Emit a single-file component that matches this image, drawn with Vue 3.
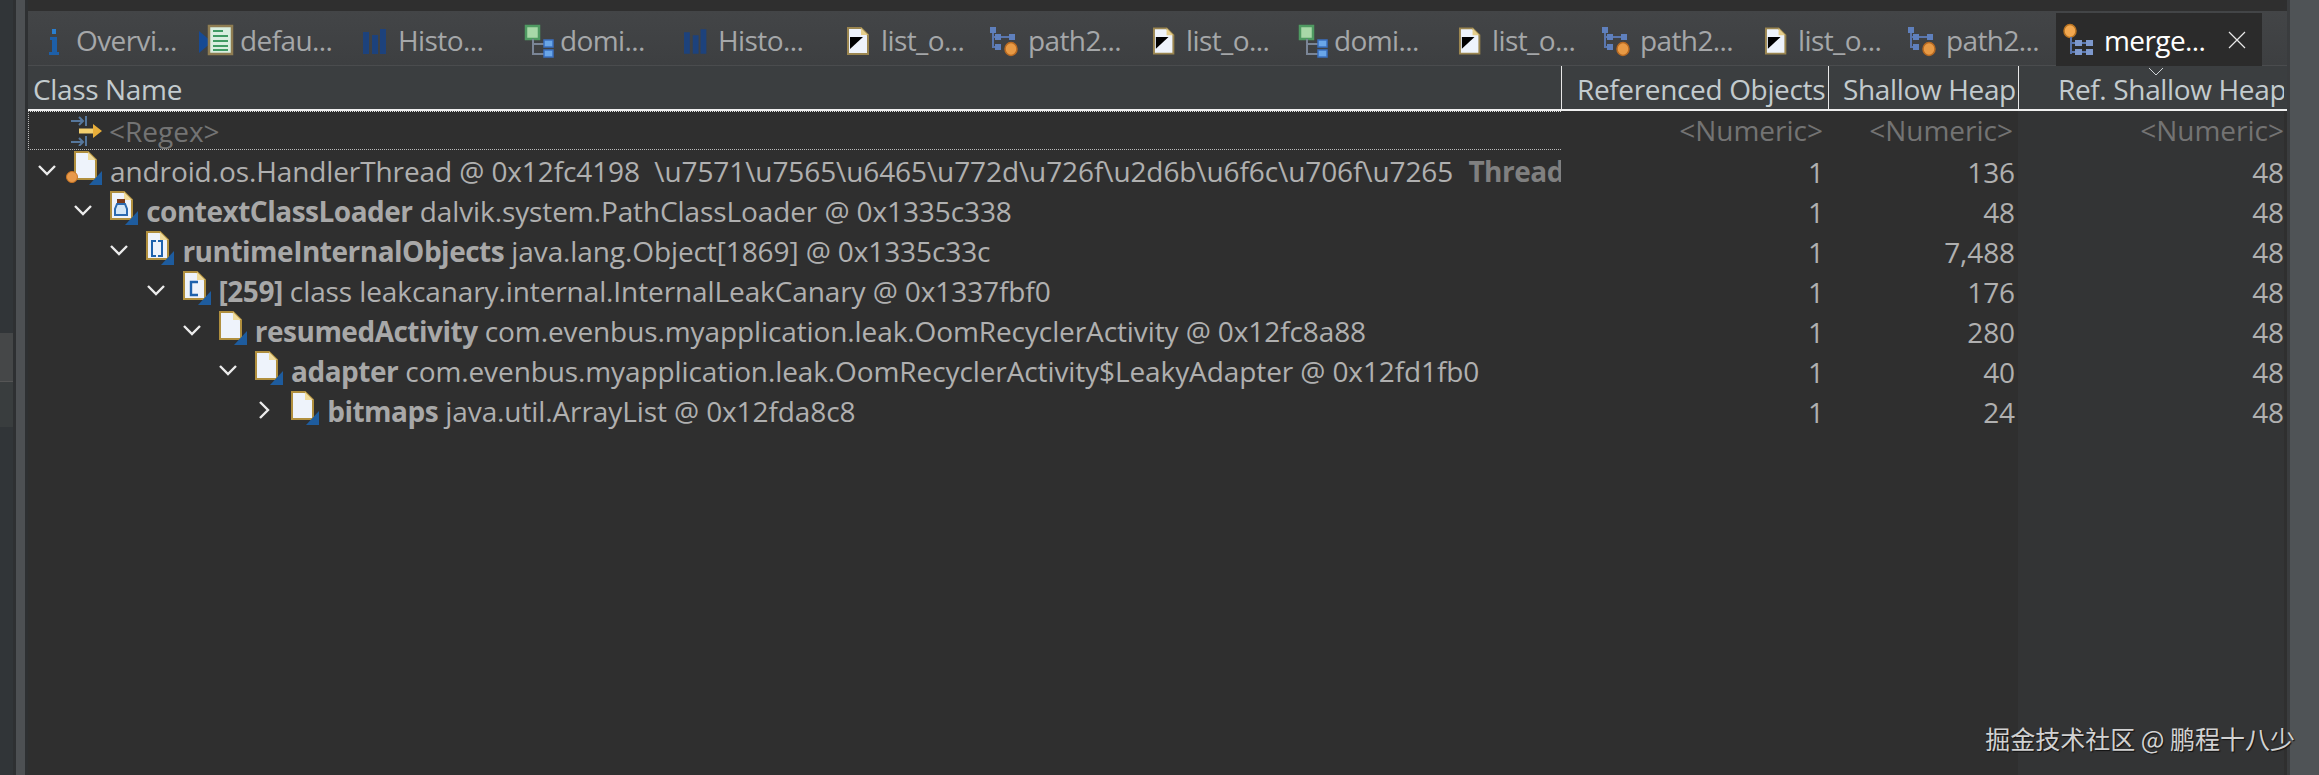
<script setup>
const tabs = [
  { icon: 'i', off: 30, w: 153, text: 'Overvi...' },
  { icon: 'def', off: 41, w: 164, text: 'defau...' },
  { icon: 'hist', off: 35, w: 161, text: 'Histo...' },
  { icon: 'domi', off: 36, w: 160, text: 'domi...' },
  { icon: 'hist', off: 34, w: 162, text: 'Histo...' },
  { icon: 'list', off: 35, w: 144, text: 'list_o...' },
  { icon: 'path', off: 38, w: 162, text: 'path2...' },
  { icon: 'list', off: 34, w: 146, text: 'list_o...' },
  { icon: 'domi', off: 36, w: 160, text: 'domi...' },
  { icon: 'list', off: 34, w: 144, text: 'list_o...' },
  { icon: 'path', off: 38, w: 162, text: 'path2...' },
  { icon: 'list', off: 34, w: 144, text: 'list_o...' },
  { icon: 'path', off: 38, w: 148, text: 'path2...' }
]
const rows = [
  { d: 0, icon: 'docgc', open: true, name: '', rest: 'android.os.HandlerThread @ 0x12fc4198  \\u7571\\u7565\\u6465\\u772d\\u726f\\u2d6b\\u6f6c\\u706f\\u7265 ', tail: 'Thread', a: '1', b: '136' },
  { d: 1, icon: 'docload', open: true, name: 'contextClassLoader', rest: ' dalvik.system.PathClassLoader @ 0x1335c338', a: '1', b: '48' },
  { d: 2, icon: 'docarr', open: true, name: 'runtimeInternalObjects', rest: ' java.lang.Object[1869] @ 0x1335c33c', a: '1', b: '7,488' },
  { d: 3, icon: 'docc', open: true, name: '[259]', rest: ' class leakcanary.internal.InternalLeakCanary @ 0x1337fbf0', a: '1', b: '176' },
  { d: 4, icon: 'doc', open: true, name: 'resumedActivity', rest: ' com.evenbus.myapplication.leak.OomRecyclerActivity @ 0x12fc8a88', a: '1', b: '280' },
  { d: 5, icon: 'doc', open: true, name: 'adapter', rest: ' com.evenbus.myapplication.leak.OomRecyclerActivity$LeakyAdapter @ 0x12fd1fb0', a: '1', b: '40' },
  { d: 6, icon: 'doc', open: false, name: 'bitmaps', rest: ' java.util.ArrayList @ 0x12fda8c8', a: '1', b: '24' }
]
</script>

<template>
  <div class="page">
    <svg class="sprite" aria-hidden="true">
      <symbol id="t-i" viewBox="0 0 30 40">
        <rect x="6" y="8" width="4" height="5" fill="#2a7fd0" />
        <path d="M4 16h7v15h2v3H3v-3h3V19H4z" fill="#1d5fa8" />
      </symbol>
      <symbol id="t-def" viewBox="0 0 41 40">
        <path d="M0 10 L13 21 L0 32 Z" fill="#174a94" />
        <rect x="10" y="5" width="23" height="28" fill="#d8eee0" stroke="#8f7d52" stroke-width="2.5" />
        <path d="M14 10h10M14 15h15M14 20h15M14 25h15M14 29h15" stroke="#3f9a63" stroke-width="2" />
      </symbol>
      <symbol id="t-hist" viewBox="0 0 35 40">
        <path d="M0 11h6v22H0zM9 14h6v19H9zM17 8h6v25h-6z" fill="#1d427c" />
      </symbol>
      <symbol id="t-domi" viewBox="0 0 36 40">
        <rect x="2" y="5" width="13" height="13" fill="#a8d8a8" stroke="#4f9a62" stroke-width="2.5" />
        <path d="M9 18v15h11M9 23h11" stroke="#7a8596" stroke-width="2" fill="none" />
        <rect x="20" y="19" width="9" height="7" fill="#6aa6e8" stroke="#3a6fc0" stroke-width="1.5" />
        <rect x="20" y="29" width="9" height="7" fill="#6aa6e8" stroke="#3a6fc0" stroke-width="1.5" />
      </symbol>
      <symbol id="t-list" viewBox="0 0 35 40">
        <path d="M2 7H15L22 14V33H2Z" fill="#eef3fb" stroke="#9b8650" stroke-width="2" />
        <path d="M15 7V14H22Z" fill="#e6cf8c" />
        <path d="M4 16H17L4 28Z" fill="#000" />
      </symbol>
      <symbol id="t-path" viewBox="0 0 38 40">
        <rect x="0" y="6" width="6" height="6" fill="#5f80bd" />
        <path d="M3 12V26H8M3 16H22" stroke="#5a76ad" stroke-width="2" fill="none" />
        <rect x="5" y="13" width="6" height="6" fill="#5f80bd" />
        <rect x="19" y="13" width="6" height="6" fill="#5f80bd" />
        <rect x="5" y="23" width="6" height="6" fill="#5f80bd" />
        <ellipse cx="21" cy="28" rx="6" ry="6.5" fill="#e89a45" stroke="#b86a22" stroke-width="1.5" />
      </symbol>
      <symbol id="t-merge" viewBox="0 0 48 40">
        <ellipse cx="14" cy="10" rx="6" ry="6.5" fill="#f2a850" stroke="#b97423" stroke-width="1.5" />
        <path d="M15 16V33M15 22H36M15 31H36" stroke="#5a76ad" stroke-width="2" fill="none" />
        <rect x="19" y="19" width="7" height="6" fill="#7d98cc" />
        <rect x="30" y="19" width="7" height="6" fill="#7d98cc" />
        <rect x="19" y="28" width="7" height="6" fill="#7d98cc" />
        <rect x="30" y="28" width="7" height="6" fill="#7d98cc" />
      </symbol>
      <symbol id="r-base" viewBox="0 0 36 34">
        <path d="M9 1H22L30 9V28H9Z" fill="#eef3fb" stroke="#b08f3e" stroke-width="2" />
        <path d="M22 1V9H30Z" fill="#f0dc9c" />
      </symbol>
      <symbol id="r-doc" viewBox="0 0 36 34">
        <use href="#r-base" />
        <path d="M36 20V34H23Z" fill="#1e5c9e" />
      </symbol>
      <symbol id="r-docgc" viewBox="0 0 36 34">
        <use href="#r-base" />
        <path d="M36 20V34H23Z" fill="#1e5c9e" />
        <circle cx="6" cy="26" r="5.5" fill="#e8994a" stroke="#c87422" stroke-width="1" />
      </symbol>
      <symbol id="r-docload" viewBox="0 0 36 34">
        <use href="#r-base" />
        <rect x="15" y="8" width="8" height="4" fill="#7a3a1c" />
        <path d="M15 13L13 18V24H25V18L23 13Z" fill="#d3e6f7" stroke="#2c6ab0" stroke-width="2" />
        <path d="M36 20V34H23Z" fill="#1e5c9e" />
      </symbol>
      <symbol id="r-docarr" viewBox="0 0 36 34">
        <use href="#r-base" />
        <path d="M18 10H14V25H18M20 10H24V25H20" fill="none" stroke="#1e62ad" stroke-width="2" />
        <path d="M36 20V34H23Z" fill="#1e5c9e" />
      </symbol>
      <symbol id="r-docc" viewBox="0 0 36 34">
        <use href="#r-base" />
        <path d="M23 11H16V24H23" fill="none" stroke="#1e62ad" stroke-width="2.4" />
        <path d="M36 20V34H23Z" fill="#1e5c9e" />
      </symbol>
    </svg>

    <aside class="left">
      <div class="left-panels">
        <div class="lp lp-a"></div>
        <div class="lp lp-b"></div>
        <div class="lp lp-c"></div>
        <div class="lp lp-a grow"></div>
      </div>
      <div class="left-sash"></div>
    </aside>

    <main class="main">
      <div class="tabbar">
        <div v-for="(t, i) in tabs" :key="i" class="tab" :style="{ width: t.w + 'px' }">
          <svg class="tab-icon" :style="{ width: t.off + 'px' }" :viewBox="`0 0 ${t.off} 40`">
            <use :href="`#t-${t.icon}`" :width="t.off" height="40" />
          </svg>
          <span>{{ t.text }}</span>
        </div>
        <div class="tab active">
          <svg class="tab-icon merge" viewBox="0 0 48 40"><use href="#t-merge" width="48" height="40" /></svg>
          <span>merge...</span>
          <svg class="close" viewBox="0 0 18 18"><path d="M1 1L17 17M17 1L1 17" stroke="#e8e8e8" stroke-width="1.2" /></svg>
        </div>
      </div>

      <div class="grid head">
        <div class="hc">Class Name</div>
        <div class="hc sep second">Referenced Objects</div>
        <div class="hc sep third">Shallow Heap</div>
        <div class="hc sep last">
          <svg class="sort" viewBox="0 0 16 9"><path d="M1 1L8 8L15 1" fill="none" stroke="#cfd3d5" stroke-width="1" /></svg>
          Ref. Shallow Heap
        </div>
      </div>

      <div class="grid filter">
        <div class="fc first">
          <svg class="regex" viewBox="0 0 32 30">
            <path d="M0 5H12M8 1L12 5L8 9M15 0V10M0 26H12M8 22L12 26L8 30M15 20V30" fill="none" stroke="#56779c" stroke-width="2" />
            <path d="M8 15H24" stroke="#f3cf6e" stroke-width="5" />
            <path d="M22 8L31 15L22 22Z" fill="#e8ae3a" />
          </svg>
          <span>&lt;Regex&gt;</span>
        </div>
        <div class="fc num">&lt;Numeric&gt;</div>
        <div class="fc num">&lt;Numeric&gt;</div>
        <div class="fc num lastcol">&lt;Numeric&gt;</div>
      </div>

      <div v-for="(r, i) in rows" :key="i" class="grid row">
        <div class="cell tree" :style="{ paddingLeft: r.d * 36.2 + 'px' }">
          <svg class="chev" viewBox="0 0 20 20">
            <path v-if="r.open" d="M2 6L10 14L18 6" fill="none" stroke="#ececec" stroke-width="2.4" />
            <path v-else d="M6 2L14 10L6 18" fill="none" stroke="#ececec" stroke-width="2.4" />
          </svg>
          <svg class="ricon" viewBox="0 0 36 34"><use :href="`#r-${r.icon}`" width="36" height="34" /></svg>
          <span class="label"><b v-if="r.name">{{ r.name }}</b>{{ r.rest }}<b v-if="r.tail" class="tail">{{ r.tail }}</b></span>
        </div>
        <div class="cell n">{{ r.a }}</div>
        <div class="cell n third-n">{{ r.b }}</div>
        <div class="cell n lastcol">48</div>
      </div>

      <div class="grid filler">
        <div></div><div></div><div></div><div class="lastcol"></div>
      </div>
    </main>

    <aside class="right"></aside>
    <div class="mark">掘金技术社区 @ 鹏程十八少</div>
  </div>
</template>

<style>
html, body { margin: 0; background: #2f2f2f; }
</style>

<style scoped>
.page {
  position: relative;
  display: flex;
  width: 2319px;
  height: 775px;
  overflow: hidden;
  background: #2f2f2f;
  font-family: "Open Sans", "Noto Sans", sans-serif;
}
.sprite { position: absolute; width: 0; height: 0; }
.left { flex: none; width: 28px; display: flex; background: #2e3032; }
.left-panels { width: 13px; display: flex; flex-direction: column; }
.lp { flex: none; }
.lp-a { height: 333px; background: #313538; }
.lp-b { height: 48px; background: #454748; }
.lp-c { height: 45px; background: #393d3e; border-top: 1px solid #555; }
.grow { flex: 1; }
.left-sash { width: 9px; margin-left: 3px; background: #4d5053; }
.main { flex: none; width: 2259px; display: flex; flex-direction: column; padding-top: 11px; background: #2f2f2f; }
.tabbar {
  flex: none;
  height: 55px;
  display: flex;
  padding-left: 18px;
  box-sizing: border-box;
  background: linear-gradient(#434547, #3d3f41);
  border-bottom: 1px solid #4a4c4e;
}
.tab {
  flex: none;
  height: 54px;
  display: flex;
  align-items: flex-start;
  color: #a5a7a9;
  font-size: 28px;
  letter-spacing: -0.6px;
  white-space: nowrap;
}
.tab-icon { flex: none; height: 40px; margin-top: 10px; }
.tab span { line-height: 38px; margin-top: 10px; }
.tab.active {
  width: 206px;
  margin-top: 2px;
  height: 53px;
  background: #2b2b2b;
  color: #fff;
}
.tab-icon.merge { width: 48px; margin-top: 8px; }
.tab.active span { margin-top: 8px; }
.close { width: 18px; height: 18px; margin-left: 23px; margin-top: 18px; }
.grid { display: grid; grid-template-columns: 1533px 267px 190px 266px; flex: none; }
.head {
  height: 45px;
  box-sizing: border-box;
  background: #3b3e40;
  border-bottom: 2px solid #f0f0f0;
  color: #c3cbce;
  font-size: 28px;
  letter-spacing: -0.35px;
}
.hc { position: relative; padding-left: 5px; line-height: 47px; white-space: nowrap; overflow: hidden; }
.hc.sep { border-left: 1px solid #e8e8e8; }
.hc.second { padding-left: 15px; }
.hc.third { padding-left: 14px; }
.hc.last { padding-left: 39px; }
.sort { position: absolute; left: 129px; top: 1px; width: 16px; height: 9px; }
.filter { height: 39px; color: #737373; font-size: 28px; }
.fc { line-height: 38px; }
.fc.first {
  display: flex;
  align-items: center;
  box-sizing: border-box;
  height: 39px;
  padding-left: 42px;
  border: 1px dotted #bbb;
  border-top: 1px dotted #ddd;
  border-right: 0;
}
.regex { width: 32px; height: 30px; margin-right: 6px; }
.num { text-align: right; padding-right: 5px; }
.num.lastcol { padding-right: 0; }
.lastcol { background: #333435; }
.row { height: 40px; color: #b0b0b0; font-size: 28px; letter-spacing: -0.1px; line-height: 41px; }
.cell { white-space: nowrap; overflow: hidden; }
.n { line-height: 44px; text-align: right; padding-right: 4px; }
.third-n { padding-right: 3px; }
.n.lastcol { padding-right: 0; }
.tree { display: flex; align-items: center; }
.chev { flex: none; width: 20px; height: 20px; margin-left: 9px; }
.ricon { flex: none; width: 36px; height: 34px; margin-left: 9px; margin-top: -4px; }
.label { white-space: pre; margin-left: 8px; padding-top: 3px; }
.label b { font-weight: 700; color: #a8a8a8; letter-spacing: -0.5px; }
.label b.tail { color: #808080; margin-left: 8px; }
.filler { flex: 1; }
.right { flex: none; width: 32px; background: #4f5356; border-left: 3px solid #3a3c3e; box-sizing: border-box; }
.mark {
  position: absolute;
  right: 24px;
  top: 722px;
  font-family: "Noto Sans CJK SC", "Noto Sans", sans-serif;
  font-size: 25px;
  line-height: 32px;
  color: #d2d2d2;
  text-shadow: 1px 1px 1px #111;
  white-space: pre;
}
</style>
